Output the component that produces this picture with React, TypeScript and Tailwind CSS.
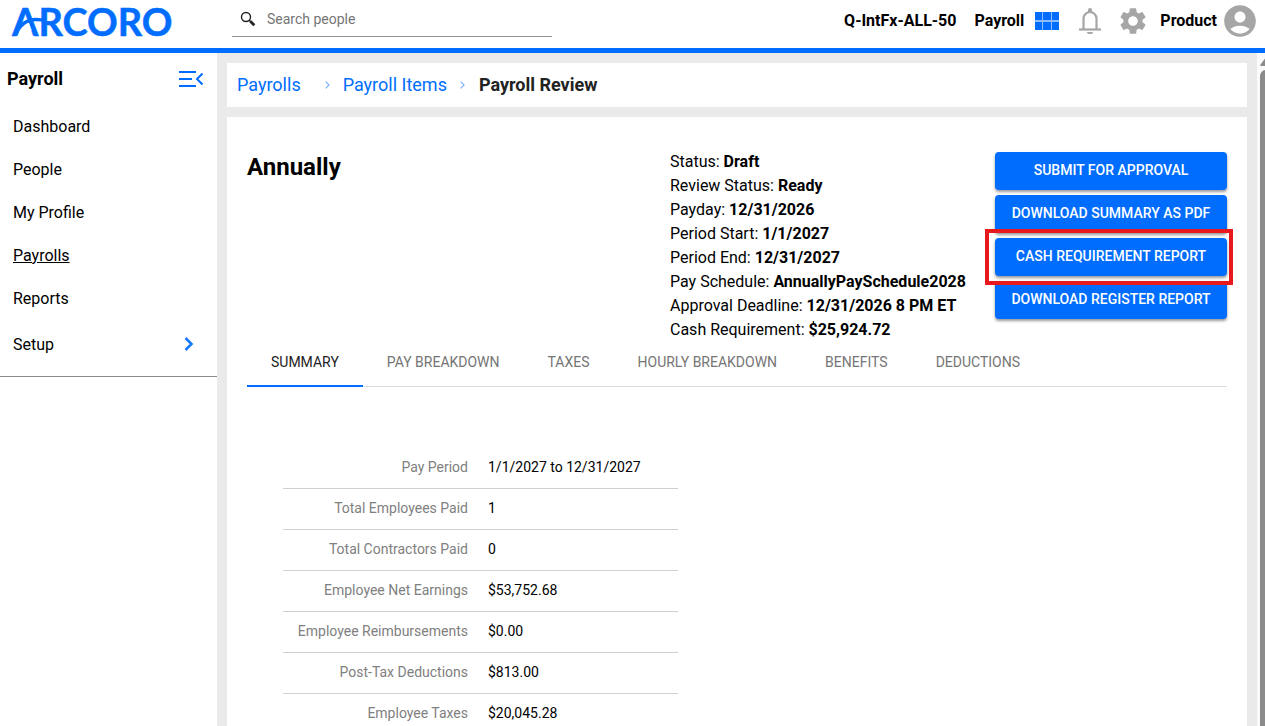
import { useState } from "react";
import clsx from "clsx";
import { MdAccountCircle, MdSettings } from "react-icons/md";

const navItems = ["Dashboard", "People", "My Profile", "Payrolls", "Reports"];

const details = [
    { label: "Status", value: "Draft" },
    { label: "Review Status", value: "Ready" },
    { label: "Payday", value: "12/31/2026" },
    { label: "Period Start", value: "1/1/2027" },
    { label: "Period End", value: "12/31/2027" },
    { label: "Pay Schedule", value: "AnnuallyPaySchedule2028" },
    { label: "Approval Deadline", value: "12/31/2026 8 PM ET" },
    { label: "Cash Requirement", value: "$25,924.72" },
];

const actions = [
    { label: "SUBMIT FOR APPROVAL" },
    { label: "DOWNLOAD SUMMARY AS PDF" },
    { label: "CASH REQUIREMENT REPORT", highlighted: true },
    { label: "DOWNLOAD REGISTER REPORT" },
];

const tabs = ["SUMMARY", "PAY BREAKDOWN", "TAXES", "HOURLY BREAKDOWN", "BENEFITS", "DEDUCTIONS"];

const summary = [
    ["Pay Period", "1/1/2027 to 12/31/2027"],
    ["Total Employees Paid", "1"],
    ["Total Contractors Paid", "0"],
    ["Employee Net Earnings", "$53,752.68"],
    ["Employee Reimbursements", "$0.00"],
    ["Post-Tax Deductions", "$813.00"],
    ["Employee Taxes", "$20,045.28"],
];

function Logo() {
    return (
        <svg className="h-12 w-[168px] shrink-0" viewBox="0 0 168 48" role="img" aria-label="Arcoro">
            <text x="4" y="36" fontSize="38" fontWeight="700" fill="#006dff" stroke="#006dff" strokeWidth="0.500" fontFamily="Lato, sans-serif">
                ARCORO
            </text>
            {/* the A has no straight bar, a swoosh runs through it into the R */}
            <path d="M14.500 23h6.500l2.800 7.500H11.700z" fill="#fff" />
            <path d="M7 35.500C11 26 18 19.500 28 19.500C32 19.500 35 20 38 21" fill="none" stroke="#006dff" strokeWidth="3.600" />
        </svg>
    );
}

function Header() {
    return (
        <header className="flex h-[53px] shrink-0 items-start border-b-[5px] border-[#006dff] bg-white pr-[9px] pl-2">
            <Logo />
            <label className="ml-14 flex h-[37px] w-80 items-center border-b border-[#949494] pt-[2px] pl-2">
                <svg className="h-4 w-4 shrink-0" viewBox="0 0 16 16" fill="none" stroke="#222">
                    <circle cx="6" cy="6" r="4.5" strokeWidth="1.4" />
                    <path d="M9 9l2 2" strokeWidth="1.4" />
                    <path d="M10.3 10.3l4 4" strokeWidth="2.8" />
                </svg>
                <input
                    type="text"
                    aria-label="Search people"
                    placeholder="Search people"
                    className="ml-[11px] w-full text-sm outline-none placeholder:text-[#757575]"
                />
            </label>
            <div className="ml-auto flex h-[42px] items-center font-bold">
                <span>Q-IntFx-ALL-50</span>
                <span className="ml-[18px]">Payroll</span>
                <button aria-label="Apps" className="ml-[11px]">
                    <svg className="h-[18px] w-6" viewBox="0 0 24 18">
                        <path fill="#8dbdff" d="M0 0h24v18H0z" />
                        <path fill="#006dff" d="M0 0h7v8H0zM8 0h8v8H8zM17 0h7v8h-7zM0 10h7v8H0zM8 10h8v8H8zM17 10h7v8h-7z" />
                    </svg>
                </button>
                <button aria-label="Notifications" className="ml-5">
                    <svg className="h-[26px] w-[22px]" viewBox="0 0 22 26" fill="none" stroke="#a6a6a6" strokeWidth="2.2">
                        <path d="M4.500 21V10.500a6.500 6.500 0 0 1 13 0V21" />
                        <path d="M0 21.500h22" />
                        <path d="M11 0a2 2 0 0 1 2 2v2H9V2a2 2 0 0 1 2-2zM8 24h6a3 2 0 0 1-6 0z" fill="#a6a6a6" stroke="none" />
                    </svg>
                </button>
                <button aria-label="Settings" className="ml-4">
                    <MdSettings className="h-8 w-8 text-[#a6a6a6]" />
                </button>
                <span className="ml-[11px]">Product</span>
                <button aria-label="Account" className="ml-1">
                    <MdAccountCircle className="-mr-[3px] h-[38px] w-[38px] text-[#a6a6a6]" />
                </button>
            </div>
        </header>
    );
}

function Sidebar() {
    return (
        <aside className="w-[217px] shrink-0 bg-white">
            <div className="flex h-[52px] items-center justify-between pr-3 pl-[7px]">
                <h2 className="text-lg font-bold">Payroll</h2>
                <button aria-label="Collapse menu">
                    <svg className="h-5 w-[26px]" viewBox="0 0 26 20" fill="none" stroke="#006dff" strokeWidth="2">
                        <path d="M0 3h17M0 10h13M0 17h17M23.500 4.500L18 10l5.500 5.500" />
                    </svg>
                </button>
            </div>
            <nav className="border-b border-[#8a8a8a] pb-[10px]">
                {navItems.map((item) => (
                    <a
                        key={item}
                        href="#"
                        className={clsx("flex h-[43px] items-center px-[13px]", item === "Payrolls" && "underline")}
                    >
                        {item}
                    </a>
                ))}
                <a href="#" className="mt-[3px] flex h-[43px] items-center justify-between pr-[23px] pl-[13px]">
                    Setup
                    <svg className="h-4 w-[10px]" viewBox="0 0 10 16" fill="none" stroke="#1a7bff" strokeWidth="2.6">
                        <path d="M1.500 1L7.500 7l-6 6" />
                    </svg>
                </a>
            </nav>
        </aside>
    );
}

function Separator() {
    return (
        <svg className="h-2 w-[5px]" viewBox="0 0 5 8" fill="none" stroke="#7fb4ff" strokeWidth="1.2">
            <path d="M.7.7L4 4 .7 7.300" />
        </svg>
    );
}

export default function App() {
    const [tab, setTab] = useState("SUMMARY");

    return (
        <div className="flex h-screen flex-col overflow-hidden bg-white font-[Roboto,sans-serif] text-base text-black">
            <Header />
            <div className="flex min-h-0 flex-1">
                <Sidebar />
                <main className="min-w-0 flex-1 overflow-hidden bg-[#eaeaea] p-[10px] pb-0">
                    <nav aria-label="Breadcrumb" className="flex h-11 items-center bg-white px-[10px] text-lg">
                        <a href="#" className="mr-6 text-[#006dff]">Payrolls</a>
                        <Separator />
                        <a href="#" className="mx-[13px] text-[#006dff]">Payroll Items</a>
                        <Separator />
                        <span className="ml-[14px] font-bold text-[#222]">Payroll Review</span>
                    </nav>

                    <section className="mt-[10px] min-h-full bg-white px-5 pt-8">
                        <div className="flex items-start">
                            <h1 className="flex-1 pt-[2px] text-2xl font-bold">Annually</h1>
                            <ul className="w-[325px] pt-px leading-6">
                                {details.map(({ label, value }) => (
                                    <li key={label}>
                                        {label}: <b>{value}</b>
                                    </li>
                                ))}
                            </ul>
                            <div className="flex w-[232px] flex-col gap-[5px] pt-[3px]">
                                {actions.map(({ label, highlighted }) => (
                                    <div key={label} className="relative">
                                        <button className="h-[38px] w-full rounded bg-[#006dff] pb-[2px] text-sm font-medium text-white shadow-[0_2px_3px_rgba(0,0,0,0.4)]">
                                            {label}
                                        </button>
                                        {highlighted && (
                                            <div className="pointer-events-none absolute -inset-y-[9px] -right-[6px] -left-[10px] z-10 border-4 border-[#e8191c]" />
                                        )}
                                    </div>
                                ))}
                            </div>
                        </div>

                        <div role="tablist" className="-mt-[3px] flex h-12 border-b border-[#dcdcdc] text-sm">
                            {tabs.map((name) => (
                                <button
                                    key={name}
                                    role="tab"
                                    aria-selected={tab === name}
                                    onClick={() => setTab(name)}
                                    className={clsx(
                                        "h-12 border-b-2 px-6",
                                        tab === name ? "border-[#006dff] text-[#222]" : "border-transparent text-[#757575]"
                                    )}
                                >
                                    {name}
                                </button>
                            ))}
                        </div>

                        <table className="mt-[61px] ml-9 w-[395px] text-sm">
                            <tbody>
                                {summary.map(([label, value]) => (
                                    <tr key={label} className="border-b border-[#d0d0d0]">
                                        <th scope="row" className="w-[185px] pt-[9px] pb-[11px] text-right font-normal text-[#808080]">
                                            {label}
                                        </th>
                                        <td className="pt-[9px] pb-[11px] pl-5">{value}</td>
                                    </tr>
                                ))}
                            </tbody>
                        </table>
                    </section>
                </main>
                <div aria-hidden="true" className="flex w-2 shrink-0 flex-col overflow-hidden bg-[#fafafa] pt-[5px] pl-[3px]">
                    <svg className="h-2 w-3 shrink-0" viewBox="0 0 12 8" fill="#8b8b8b">
                        <path d="M5 0.500L0.500 6.500Q0 8 1 8H11Q12 8 11 6.500L7 .5Q6-.5 5 .5z" />
                    </svg>
                    <div className="mt-1 w-3 flex-1 rounded-t-md bg-[#8b8b8b]" />
                </div>
            </div>
        </div>
    );
}
